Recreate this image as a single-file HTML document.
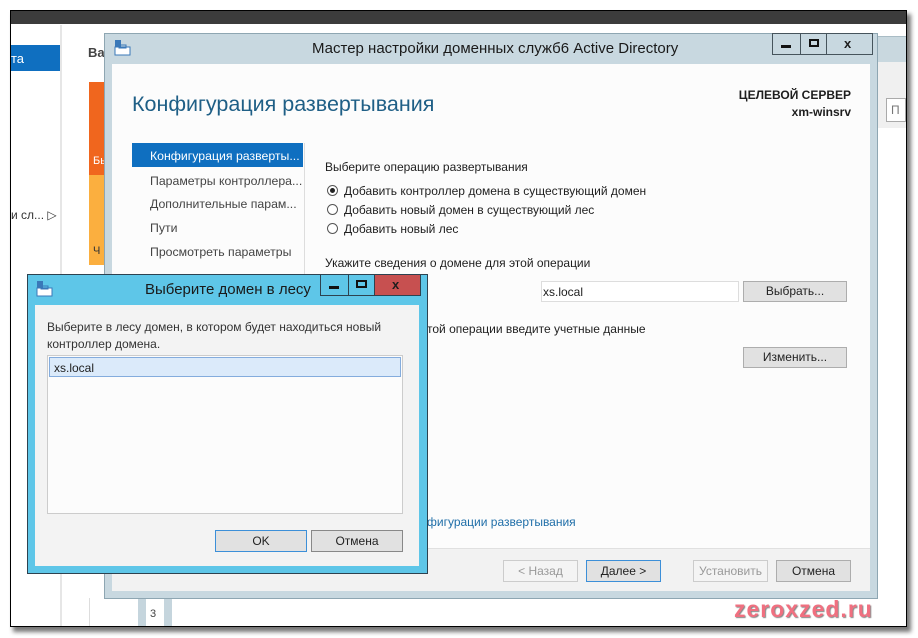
<!DOCTYPE html>
<html><head><meta charset="utf-8"><style>
*{margin:0;padding:0;box-sizing:border-box}
body{width:918px;height:638px;background:#fff;position:relative;overflow:hidden;font-family:"Liberation Sans","DejaVu Sans",sans-serif;font-size:12px;color:#1e1e1e}
.a{position:absolute}
.t{position:absolute;white-space:nowrap}
.btn{position:absolute;background:#e1e1e1;border:1px solid #adadad;text-align:center;line-height:21px;font-size:12px;color:#222}
.radio{position:absolute;width:11px;height:11px;border:1px solid #555;border-radius:50%;background:#fff}
</style></head><body>
<div class="a" style="left:13px;top:14px;width:898px;height:618px;background:#777;filter:blur(2px)"></div>
<div class="a" style="left:10px;top:10px;width:897px;height:617px;background:#fff;border:1px solid #000"></div>
<div class="a" style="left:11px;top:11px;width:895px;height:13px;background:#3c3c3c"></div>
<div class="a" style="left:11px;top:45px;width:49px;height:26px;background:#0f6fc0"></div>
<div class="t" style="left:11px;top:51px;color:#fff;font-size:13px">та</div>
<div class="t" style="left:11px;top:208px;font-size:12px;color:#333">и сл... ▷</div>
<div class="a" style="left:60px;top:25px;width:2px;height:601px;background:#e6e6e6"></div>
<div class="t" style="left:88px;top:45px;font-weight:bold;font-size:13px;color:#444">Ва</div>
<div class="a" style="left:89px;top:82px;width:16px;height:93px;background:#f0661e"></div>
<div class="a" style="left:89px;top:175px;width:16px;height:90px;background:#fbaf3f"></div>
<div class="t" style="left:93px;top:155px;color:#fff;font-size:11px">Бы</div>
<div class="t" style="left:93px;top:245px;color:#333;font-size:11px">Ч</div>
<div class="a" style="left:89px;top:598px;width:1px;height:28px;background:#ddd"></div>
<div class="a" style="left:138px;top:598px;width:8px;height:28px;background:#c5d5dd"></div>
<div class="a" style="left:164px;top:598px;width:8px;height:28px;background:#c5d5dd"></div>
<div class="t" style="left:150px;top:608px;font-size:11px;color:#444">3</div>
<div class="a" style="left:878px;top:36px;width:28px;height:26px;background:#c9d8df;border-top:1px solid #a9bcc5"></div>
<div class="a" style="left:878px;top:62px;width:28px;height:66px;background:#f0f0f0"></div>
<div class="a" style="left:886px;top:98px;width:20px;height:24px;border:1px solid #aaa;background:#fff"></div>
<div class="t" style="left:891px;top:103px;color:#777">П</div>
<div class="a" style="left:104px;top:33px;width:774px;height:566px;background:#c8d8e0;border:1px solid #8ea6b2"></div>
<svg class="a" style="left:114px;top:40px" width="18" height="16"><rect x="1" y="0" width="6" height="7" fill="#3a78b8"/><rect x="1" y="7" width="15" height="8" fill="#fff" stroke="#3a78b8"/><rect x="5" y="5" width="7" height="3" fill="none" stroke="#3a78b8"/></svg>
<div class="t" style="left:312px;top:40px;font-size:15px;color:#1a1a1a">Мастер настройки доменных служб6 Active Directory</div>
<div class="a" style="left:772px;top:33px;width:101px;height:22px;border:1px solid #46545c;background:#c8d8e0"></div>
<div class="a" style="left:800px;top:34px;width:1px;height:20px;background:#46545c"></div>
<div class="a" style="left:826px;top:34px;width:1px;height:20px;background:#46545c"></div>
<div class="a" style="left:781px;top:45px;width:10px;height:3px;background:#111"></div>
<div class="a" style="left:809px;top:39px;width:10px;height:8px;border:2px solid #111"></div>
<div class="t" style="left:844px;top:36px;font-weight:bold;font-size:13px">x</div>
<div class="a" style="left:112px;top:64px;width:758px;height:527px;background:#fcfcfc"></div>
<div class="a" style="left:112px;top:548px;width:758px;height:43px;background:#f2f2f2;border-top:1px solid #e0e0e0"></div>
<div class="t" style="left:132px;top:92px;font-size:21.5px;color:#1f5f86">Конфигурация развертывания</div>
<div class="t" style="right:67px;top:88px;font-weight:bold;font-size:12px;text-align:right">ЦЕЛЕВОЙ СЕРВЕР</div>
<div class="t" style="right:67px;top:105px;font-weight:bold;font-size:12px;text-align:right">xm-winsrv</div>
<div class="a" style="left:132px;top:143px;width:171px;height:24px;background:#0f6fc0"></div>
<div class="t" style="left:150px;top:149px;color:#fff;font-size:12.3px">Конфигурация разверты...</div>
<div class="t" style="left:150px;top:174px;color:#444;font-size:12.3px">Параметры контроллера...</div>
<div class="t" style="left:150px;top:197px;color:#444;font-size:12.3px">Дополнительные парам...</div>
<div class="t" style="left:150px;top:221px;color:#444;font-size:12.3px">Пути</div>
<div class="t" style="left:150px;top:245px;color:#444;font-size:12.3px">Просмотреть параметры</div>
<div class="a" style="left:304px;top:143px;width:1px;height:140px;background:#ddd"></div>
<div class="t" style="left:325px;top:160px">Выберите операцию развертывания</div>
<div class="radio" style="left:327px;top:185px"></div><div class="a" style="left:330px;top:188px;width:5px;height:5px;border-radius:50%;background:#222"></div>
<div class="radio" style="left:327px;top:204px"></div>
<div class="radio" style="left:327px;top:223px"></div>
<div class="t" style="left:344px;top:184px">Добавить контроллер домена в существующий домен</div>
<div class="t" style="left:344px;top:203px">Добавить новый домен в существующий лес</div>
<div class="t" style="left:344px;top:222px">Добавить новый лес</div>
<div class="t" style="left:325px;top:256px">Укажите сведения о домене для этой операции</div>
<div class="a" style="left:541px;top:281px;width:198px;height:21px;border:1px solid #ddd;background:#fff"></div>
<div class="t" style="left:543px;top:285px">xs.local</div>
<div class="btn" style="left:743px;top:281px;width:104px;height:21px;line-height:19px">Выбрать...</div>
<div class="t" style="left:427px;top:322px">той операции введите учетные данные</div>
<div class="btn" style="left:743px;top:347px;width:104px;height:21px;line-height:19px">Изменить...</div>
<div class="t" style="left:427px;top:515px;color:#1f6ea8">фигурации развертывания</div>
<div class="btn" style="left:503px;top:560px;width:75px;height:22px;background:#f4f4f4;border-color:#ccc;color:#999">&lt; Назад</div>
<div class="btn" style="left:586px;top:560px;width:75px;height:22px;border-color:#3c8fd8">Далее &gt;</div>
<div class="btn" style="left:693px;top:560px;width:75px;height:22px;background:#f4f4f4;border-color:#ccc;color:#999">Установить</div>
<div class="btn" style="left:776px;top:560px;width:75px;height:22px">Отмена</div>
<div class="t" style="left:734px;top:596px;font-size:23px;font-weight:bold;color:#f07080;letter-spacing:1px;text-shadow:1px 1px 1px #888">zeroxzed.ru</div>
<div class="a" style="left:27px;top:274px;width:401px;height:300px;background:#5ec6e8;border:1px solid #2d4250"></div>
<svg class="a" style="left:36px;top:281px" width="18" height="16"><rect x="1" y="0" width="6" height="7" fill="#3a78b8"/><rect x="1" y="7" width="15" height="8" fill="#fff" stroke="#3a78b8"/><rect x="5" y="5" width="7" height="3" fill="none" stroke="#3a78b8"/></svg>
<div class="t" style="left:145px;top:281px;font-size:15px;color:#1a1a1a">Выберите домен в лесу</div>
<div class="a" style="left:320px;top:274px;width:101px;height:22px;border:1px solid #2d4250;background:#5ec6e8"></div>
<div class="a" style="left:348px;top:275px;width:1px;height:20px;background:#2d4250"></div>
<div class="a" style="left:374px;top:275px;width:46px;height:20px;background:#c75050;border-left:1px solid #2d4250"></div>
<div class="a" style="left:329px;top:286px;width:10px;height:3px;background:#111"></div>
<div class="a" style="left:356px;top:280px;width:11px;height:8px;border:2px solid #111"></div>
<div class="t" style="left:392px;top:277px;font-weight:bold;font-size:13px">x</div>
<div class="a" style="left:35px;top:305px;width:384px;height:261px;background:#f3f3f3"></div>
<div class="t" style="left:47px;top:320px;color:#333">Выберите в лесу домен, в котором будет находиться новый</div>
<div class="t" style="left:47px;top:337px;color:#333">контроллер домена.</div>
<div class="a" style="left:47px;top:355px;width:356px;height:159px;border:1px solid #ccc;background:#fcfcfc"></div>
<div class="a" style="left:49px;top:357px;width:352px;height:20px;border:1px solid #84acdd;background:#dbeafa"></div>
<div class="t" style="left:54px;top:361px">xs.local</div>
<div class="btn" style="left:215px;top:530px;width:92px;height:22px;border-color:#3c8fd8">OK</div>
<div class="btn" style="left:311px;top:530px;width:92px;height:22px;border-color:#888">Отмена</div>
</body></html>
